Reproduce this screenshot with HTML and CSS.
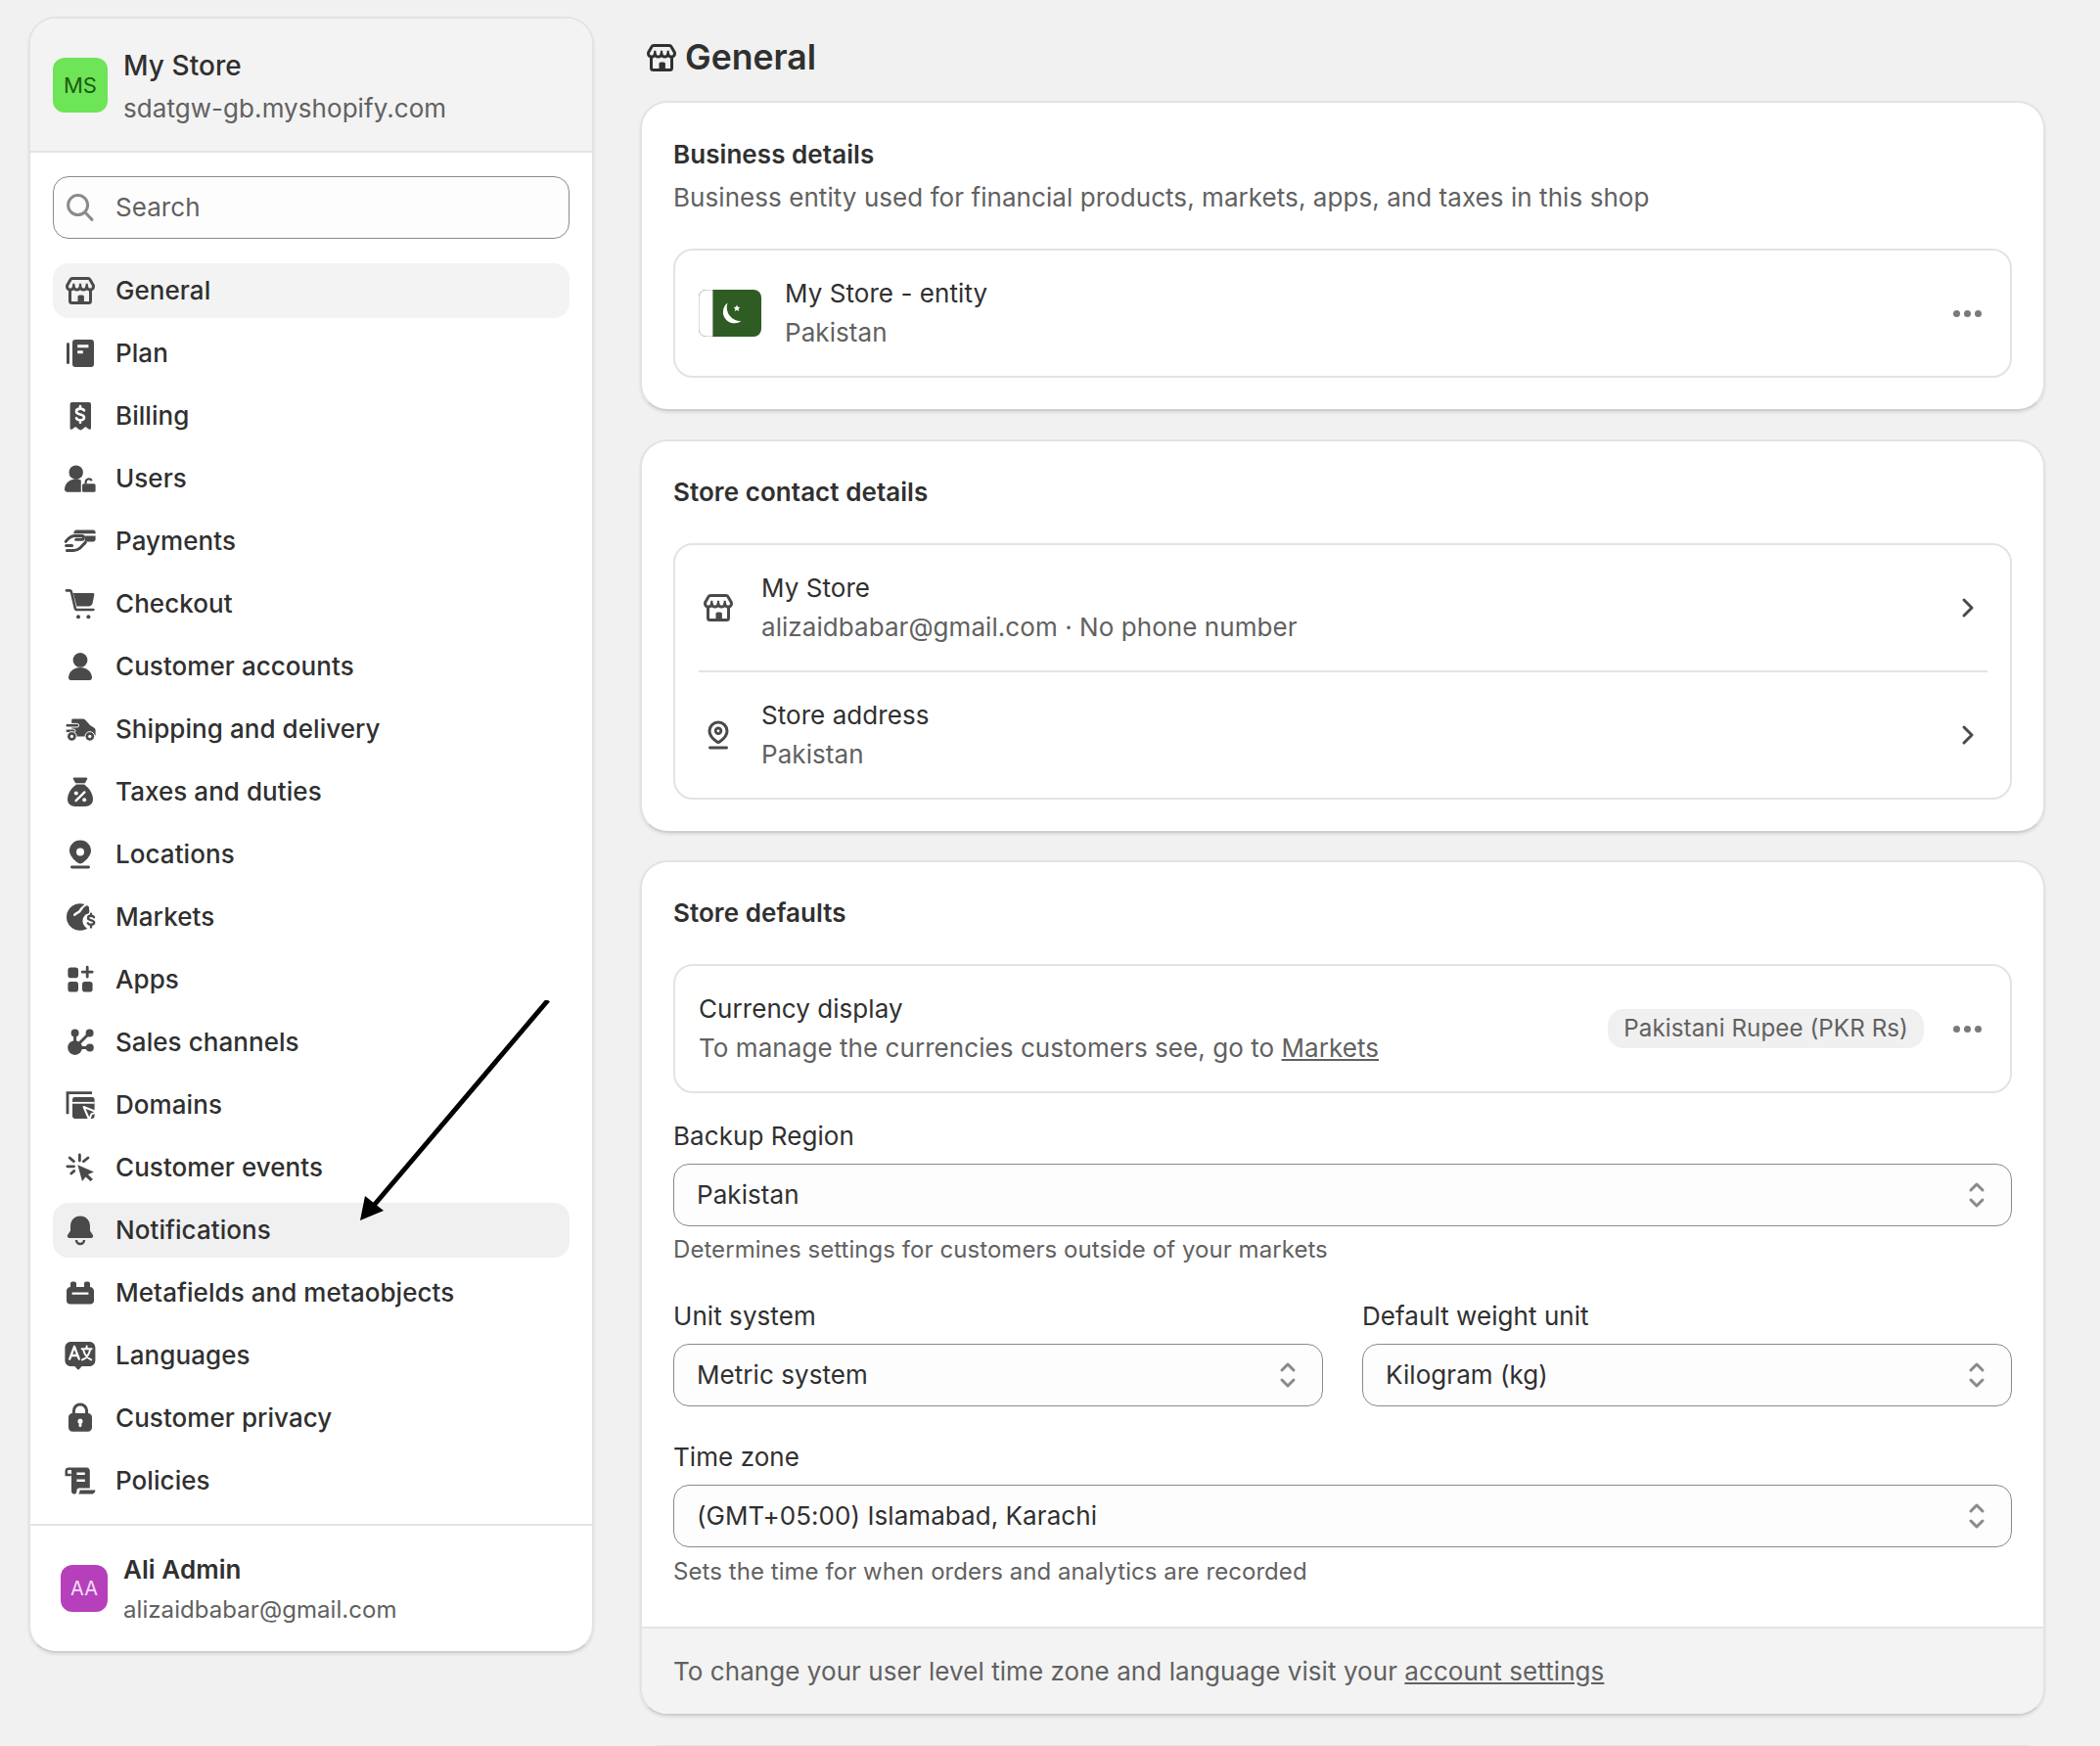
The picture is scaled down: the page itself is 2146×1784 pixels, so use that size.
FILE: index.html
```html
<!DOCTYPE html>
<html lang="en">
<head>
    <meta charset="UTF-8">
    <meta name="viewport" content="width=device-width, initial-scale=1.0">
    <title>General</title>
    <link rel="stylesheet" href="styles.css">
</head>
<body>
    <svg class="sprites" xmlns="http://www.w3.org/2000/svg">
        <symbol id="i-store" viewBox="0 0 20 20">
            <path fill="none" stroke="currentColor" stroke-width="1.5" stroke-linejoin="round" d="M6 3.75h8c.4 0 .8.2 1 .6l1.5 2.6c.2.3.25.6.25.9a1.7 1.7 0 0 1-3.4 0 1.675 1.675 0 0 1-3.35 0 1.675 1.675 0 0 1-3.35 0 1.7 1.7 0 0 1-3.4 0c0-.3.05-.6.25-.9l1.5-2.6c.2-.4.6-.6 1-.6z"/>
            <path fill="none" stroke="currentColor" stroke-width="1.1" d="M13.35 7.8V6.4M10 7.8V6.4M6.65 7.8V6.4"/>
            <path fill="none" stroke="currentColor" stroke-width="1.5" d="M4.75 9.8v5.45c0 .55.45 1 1 1h8.5c.55 0 1-.45 1-1V9.8"/>
            <path d="M8.75 16.25v-3.1c0-.5.4-.9.9-.9h1.4c.5 0 .9.4.9.9v3.1z"/>
        </symbol>
        <symbol id="i-plan" viewBox="0 0 20 20">
            <rect x="3" y="4.5" width="1.5" height="11" rx=".75"/>
            <path fill-rule="evenodd" d="M7.5 3h8A1.5 1.5 0 0 1 17 4.5v11a1.5 1.5 0 0 1-1.5 1.5h-8A1.5 1.5 0 0 1 6 15.5v-11A1.5 1.5 0 0 1 7.5 3zM8.6 5.6v1.5h5.6V5.6zM8.6 8.6v1.5h2.8V8.6z"/>
        </symbol>
        <symbol id="i-billing" viewBox="0 0 20 20">
            <path d="M5.5 3h9c.55 0 1 .45 1 1v12.2c0 .6-.6.9-1.1.6l-1.7-1.3-1.9 1.5c-.45.3-.85.3-1.3 0l-1.9-1.5-1.7 1.3c-.5.3-1.1 0-1.1-.6V4c0-.55.45-1 1-1z"/>
            <path fill="none" stroke="#fff" stroke-width="1.3" stroke-linecap="round" d="M12 7.2c-.3-.6-1-.9-2-.9-1.1 0-2 .5-2 1.4 0 2 4 1.1 4 3 0 .9-.9 1.4-2 1.4-1 0-1.7-.3-2-1M10 5v1.2M10 12.2v1.2"/>
        </symbol>
        <symbol id="i-users" viewBox="0 0 20 20">
            <circle cx="7.85" cy="6.85" r="3.6"/>
            <path d="M2 15.5c0-3 2.6-5.3 5.8-5.3 1 0 1.9.2 2.6.6v6.1h-7c-.8 0-1.4-.6-1.4-1.4z"/>
            <rect x="11" y="12.6" width="6.8" height="4.3" rx=".8"/>
            <path fill="none" stroke="currentColor" stroke-width="1.1" d="M12.8 12.8v-1a1.65 1.65 0 0 1 3.1-.7"/>
        </symbol>
        <symbol id="i-payments" viewBox="0 0 20 20">
            <path d="M8 4.3h8.6c.7 0 1.2.5 1.2 1.1v.7H6.6C6.8 5 7.2 4.3 8 4.3z"/>
            <path d="M11.8 7.2h6v1.9c0 .6-.5 1.1-1.2 1.1h-4.400c.4-1 .5-2.200-.4-3z"/>
            <path fill="none" stroke="currentColor" stroke-width="1.5" stroke-linecap="round" stroke-linejoin="round" d="M2.6 10.200C4 8.400 5.500 7.400 7 7.300h3.900c1 0 1 1.800 0 1.800H7.800M3.200 14.700h3.400c1.400 0 2.400-.5 3.400-1.300l2.600-2.700M2.800 12.200h3"/>
        </symbol>
        <symbol id="i-checkout" viewBox="0 0 20 20">
            <path fill="none" stroke="currentColor" stroke-width="1.3" stroke-linecap="round" stroke-linejoin="round" d="M3 3.2h1.5c.5 0 .9.3 1 .8l2 8.6c.1.3.3.4.6.4h8.6"/>
            <path d="M6.4 4.5h10.2c.4 0 .7.4.6.8l-.9 4.3c-.2.9-1 1.6-2 1.6H8.2z"/>
            <circle cx="9" cy="16.6" r="1"/>
            <circle cx="14.2" cy="16.6" r="1"/>
        </symbol>
        <symbol id="i-customer" viewBox="0 0 20 20">
            <circle cx="10" cy="6.7" r="3.7"/>
            <path d="M4 15.8c0-3 2.7-5.3 6-5.3s6 2.3 6 5.3c0 .7-.5 1.2-1.2 1.2H5.2C4.5 17 4 16.5 4 15.8z"/>
        </symbol>
        <symbol id="i-shipping" viewBox="0 0 20 20">
            <path d="M6.200 4.700h5c.7 0 1.300.3 1.700.9L15 8l2 1.200c.5.3.8.8.8 1.300v2.300c0 .6-.4 1-1 1H7c-.8 0-1.400-.6-1.400-1.400V5.300c0-.3.3-.6.6-.6z"/>
            <g stroke="#fff" stroke-width=".5">
                <rect x="2.500" y="7.200" width="6.800" height="1.800" rx=".9"/>
                <rect x="2.500" y="10" width="5" height="1.800" rx=".9"/>
                <circle cx="5.700" cy="13.700" r="2.400"/>
                <circle cx="14.900" cy="13.700" r="2.400"/>
            </g>
            <circle cx="5.700" cy="13.700" r=".8" fill="#fff"/>
            <circle cx="14.900" cy="13.700" r=".8" fill="#fff"/>
        </symbol>
        <symbol id="i-taxes" viewBox="0 0 20 20">
            <path d="M6.9 2.7h6.2c.4 0 .7.4.5.8l-1.2 2.1H7.6L6.4 3.5c-.2-.4.1-.8.5-.8z"/>
            <path d="M8 6.3h4c2.5 1.7 4.5 4.7 4.5 7.5 0 2.4-1.7 3.7-4 3.7h-5c-2.3 0-4-1.3-4-3.7 0-2.8 2-5.8 4.5-7.5z"/>
            <path fill="none" stroke="#fff" stroke-width="1.2" stroke-linecap="round" d="M7.8 14.6l4.4-4.4"/>
            <circle cx="7.9" cy="10.7" r="1" fill="#fff"/>
            <circle cx="12.1" cy="14.1" r="1" fill="#fff"/>
        </symbol>
        <symbol id="i-location" viewBox="0 0 20 20">
            <path fill-rule="evenodd" d="M10 2.700c3.100 0 5.500 2.400 5.500 5.400 0 2.400-2.400 4.900-4.400 6.300-.7.5-1.500.5-2.200 0-2-1.400-4.400-3.900-4.400-6.300 0-3 2.400-5.400 5.500-5.400zM10 6.700a2 2 0 1 0 0 4 2 2 0 0 0 0-4z"/>
            <rect x="5" y="15.800" width="10" height="1.400" rx=".7"/>
        </symbol>
        <symbol id="i-pin" viewBox="0 0 20 20">
            <path fill="none" stroke="currentColor" stroke-width="1.5" d="M10 3.500c2.500 0 4.500 2 4.500 4.500 0 2-2 4.200-3.700 5.400-.5.35-1.100.35-1.600 0C7.500 12.200 5.500 10 5.500 8c0-2.500 2-4.500 4.500-4.500z"/>
            <circle cx="10" cy="7.900" r="1.400" fill="none" stroke="currentColor" stroke-width="1.400"/>
            <rect x="5" y="15.800" width="10" height="1.400" rx=".7"/>
        </symbol>
        <symbol id="i-markets" viewBox="0 0 20 20">
            <circle cx="9.900" cy="10" r="6.900"/>
            <path fill="none" stroke="#fff" stroke-width="1.200" stroke-linecap="round" d="M13.400 2.800c-.8 2-2.800 2.200-3.300 3.700-.5 1.400-2.100 1.100-3 2.400"/>
            <circle cx="15.500" cy="12" r="4.300" fill="#fff"/>
            <path fill="#fff" d="M14.500 3.500h4v6h-4z"/>
            <path fill="none" stroke="currentColor" stroke-width="1.200" stroke-linecap="round" d="M17 10.100c-.3-.5-.8-.7-1.500-.7-.9 0-1.500.4-1.500 1.100 0 1.500 3.100.8 3.100 2.300 0 .7-.7 1.100-1.600 1.100-.7 0-1.300-.2-1.600-.8M15.500 8.300v1.100M15.500 14v1.200"/>
            <path d="M12 4.700c1.200.2 2.300 1 2.800 2.100l-.7 1.400-2.100.3-1.100-1.200z"/>
        </symbol>
        <symbol id="i-apps" viewBox="0 0 20 20">
            <rect x="3.7" y="3.8" width="5.3" height="5.3" rx="1.4"/>
            <rect x="3.7" y="11" width="5.3" height="5.3" rx="1.4"/>
            <rect x="11" y="11" width="5.3" height="5.3" rx="1.4"/>
            <path fill="none" stroke="currentColor" stroke-width="1.4" stroke-linecap="round" d="M13.6 3.6v5M11.1 6.1h5"/>
        </symbol>
        <symbol id="i-channels" viewBox="0 0 20 20">
            <circle cx="7.3" cy="12.8" r="3.7"/>
            <circle cx="7.3" cy="5.3" r="2"/>
            <circle cx="14.8" cy="5.3" r="2"/>
            <circle cx="14.9" cy="12.8" r="2"/>
            <path fill="none" stroke="currentColor" stroke-width="1.5" d="M7.3 6v5M14 6l-5.5 5.5M9 12.8h5"/>
        </symbol>
        <symbol id="i-domains" viewBox="0 0 20 20">
            <path fill="none" stroke="currentColor" stroke-width="1.4" d="M16 3.800H3.500v10.800"/>
            <rect x="6" y="6" width="11.300" height="11" rx="1.200"/>
            <path fill="none" stroke="#fff" stroke-width=".9" d="M6 8.900h11.300"/>
            <path stroke="#fff" stroke-width="1" stroke-linejoin="round" d="M11.800 11l6.600 2.600-2.700 1.100-1.100 2.800z"/>
        </symbol>
        <symbol id="i-events" viewBox="0 0 20 20">
            <path fill="none" stroke="currentColor" stroke-width="1.4" stroke-linecap="round" d="M9.700 3.500v3M3.400 9.400h3.400M4.600 5l2.100 1.800M14 5l-2.300 1.800M5.400 13l1.500-1.300"/>
            <path d="M8.700 8.600L17 12.200l-3 1.300 2.500 2.500-1.300 1-2.400-2.200L11 17z"/>
        </symbol>
        <symbol id="i-bell" viewBox="0 0 20 20">
            <path d="M10 2.800c-3 0-5 2.300-5 5.200v2.200l-1.400 2.200c-.5.8 0 1.600 1 1.600h10.800c1 0 1.500-.8 1-1.600L15 10.200V8c0-2.900-2-5.200-5-5.200z"/>
            <path fill="none" stroke="currentColor" stroke-width="1.200" d="M8 15a2 2 0 0 0 4 0"/>
        </symbol>
        <symbol id="i-meta" viewBox="0 0 20 20">
            <path fill-rule="evenodd" d="M5 7V5.200c0-.55.45-1 1-1h1c.55 0 1 .45 1 1V7h4V5.200c0-.55.45-1 1-1h1c.55 0 1 .45 1 1V7c1.100 0 2 .9 2 2v5c0 1-.8 1.800-1.800 1.800H4.800C3.800 15.800 3 15 3 14V9c0-1.100.9-2 2-2zM5.800 9.700v1.200h8.400V9.700z"/>
        </symbol>
        <symbol id="i-lang" viewBox="0 0 20 20">
            <path d="M5.200 3h9.500c1.700 0 3 1.300 3 3v6.500c0 1.700-1.300 3-3 3h-3.900l-1.300 1.500c-.3.300-.7.300-1 0l-1.300-1.500h-2c-1.700 0-3-1.300-3-3V6c0-1.700 1.300-3 3-3z"/>
            <path fill="none" stroke="#fff" stroke-width="1.150" stroke-linecap="round" stroke-linejoin="round" d="M4.600 11.800L7 5.400l2.400 6.400M5.400 10h3.200"/>
            <path fill="none" stroke="#fff" stroke-width="1" stroke-linecap="round" d="M10.800 6.600h5M13.300 5.200v1.400M11.500 6.800c.6 2.600 2.200 4.600 4.100 5.400M15.100 6.800c-.5 2.600-2 4.600-4.100 5.400"/>
        </symbol>
        <symbol id="i-lock" viewBox="0 0 20 20">
            <path fill="none" stroke="currentColor" stroke-width="1.500" d="M6.700 8V6.300a3.300 3.300 0 0 1 6.600 0V8"/>
            <path fill-rule="evenodd" d="M6 7.500h8c1.100 0 2 .9 2 2v5.400c0 1.100-.9 2-2 2H6c-1.100 0-2-.9-2-2V9.500c0-1.100.9-2 2-2zM10 10.300a1.300 1.300 0 0 0-.7 2.400v1.200c0 .4.300.7.700.7s.7-.3.700-.7v-1.200a1.300 1.300 0 0 0-.7-2.400z"/>
        </symbol>
        <symbol id="i-policies" viewBox="0 0 20 20">
            <path fill-rule="evenodd" d="M5.500 3.200h7.800c.9 0 1.600.7 1.600 1.600v9H9.500c-.8 0-1.300.6-1.300 1.300v.4c0 .7-.5 1.300-1.300 1.300-.8 0-1.400-.6-1.400-1.400zM8.200 5.700v1.300h4.200V5.700zM8.200 9.200v1.300h4.200V9.200z"/>
            <path fill="none" stroke="currentColor" stroke-width="1.300" d="M5.500 3.850H4c-.6 0-1.100.5-1.100 1.100V7h2.500"/>
            <path d="M9.800 14.800h7.900c0 1.100-.8 2-1.900 2H9c.6-.5.800-1.300.8-2z"/>
        </symbol>
    </svg>

    <div class="page">
        <aside class="sidebar">
            <header class="side-head">
                <span class="avatar avatar-store">MS</span>
                <div class="who">
                    <p class="who-name">My Store</p>
                    <p class="who-sub">sdatgw-gb.myshopify.com</p>
                </div>
            </header>

            <div class="side-body">
                <div class="search">
                    <svg class="icon search-icon" viewBox="0 0 20 20"><circle cx="8.800" cy="8.800" r="5" fill="none" stroke="currentColor" stroke-width="1.500"/><path fill="none" stroke="currentColor" stroke-width="1.500" stroke-linecap="round" d="M12.600 12.600l3.400 3.600"/></svg>
                    <span>Search</span>
                </div>

                <nav class="nav">
                    <a class="nav-item is-active"><svg class="icon"><use href="#i-store"/></svg>General</a>
                    <a class="nav-item"><svg class="icon"><use href="#i-plan"/></svg>Plan</a>
                    <a class="nav-item"><svg class="icon"><use href="#i-billing"/></svg>Billing</a>
                    <a class="nav-item"><svg class="icon"><use href="#i-users"/></svg>Users</a>
                    <a class="nav-item"><svg class="icon"><use href="#i-payments"/></svg>Payments</a>
                    <a class="nav-item"><svg class="icon"><use href="#i-checkout"/></svg>Checkout</a>
                    <a class="nav-item"><svg class="icon"><use href="#i-customer"/></svg>Customer accounts</a>
                    <a class="nav-item"><svg class="icon"><use href="#i-shipping"/></svg>Shipping and delivery</a>
                    <a class="nav-item"><svg class="icon"><use href="#i-taxes"/></svg>Taxes and duties</a>
                    <a class="nav-item"><svg class="icon"><use href="#i-location"/></svg>Locations</a>
                    <a class="nav-item"><svg class="icon"><use href="#i-markets"/></svg>Markets</a>
                    <a class="nav-item"><svg class="icon"><use href="#i-apps"/></svg>Apps</a>
                    <a class="nav-item"><svg class="icon"><use href="#i-channels"/></svg>Sales channels</a>
                    <a class="nav-item"><svg class="icon"><use href="#i-domains"/></svg>Domains</a>
                    <a class="nav-item"><svg class="icon"><use href="#i-events"/></svg>Customer events</a>
                    <a class="nav-item is-hover"><svg class="icon"><use href="#i-bell"/></svg>Notifications</a>
                    <a class="nav-item"><svg class="icon"><use href="#i-meta"/></svg>Metafields and metaobjects</a>
                    <a class="nav-item"><svg class="icon"><use href="#i-lang"/></svg>Languages</a>
                    <a class="nav-item"><svg class="icon"><use href="#i-lock"/></svg>Customer privacy</a>
                    <a class="nav-item"><svg class="icon"><use href="#i-policies"/></svg>Policies</a>
                </nav>
            </div>

            <footer class="side-foot">
                <span class="avatar avatar-user">AA</span>
                <div>
                    <p class="who-name">Ali Admin</p>
                    <p class="who-sub">alizaidbabar@gmail.com</p>
                </div>
            </footer>
        </aside>

        <main class="content">
            <h1 class="page-title"><svg class="icon"><use href="#i-store"/></svg>General</h1>

            <section class="card card-business">
                <h2 class="card-title">Business details</h2>
                <p class="muted card-sub">Business entity used for financial products, markets, apps, and taxes in this shop</p>
                <div class="box box-entity">
                    <div class="row">
                        <svg class="flag" viewBox="0 0 64 48">
                            <rect width="64" height="48" fill="#2f5c23"/>
                            <path d="M14 .5H7A6.500 6.500 0 0 0 .5 7v34A6.500 6.500 0 0 0 7 47.500h7z" fill="#fff" stroke="#dedede"/>
                            <path fill="#fff" d="M29.500 13.500A11.600 11.600 0 0 0 43.500 32 14 14 0 0 1 29.500 13.500z"/>
                            <path fill="#fff" d="M39 15.500l1 2.300 2.500.2-1.900 1.600.6 2.400-2.200-1.300-2.200 1.300.6-2.400-1.900-1.600 2.500-.2z"/>
                        </svg>
                        <div class="row-text">
                            <p>My Store - entity</p>
                            <p class="muted">Pakistan</p>
                        </div>
                        <span class="dots"><i></i><i></i><i></i></span>
                    </div>
                </div>
            </section>

            <section class="card">
                <h2 class="card-title">Store contact details</h2>
                <div class="box">
                    <div class="row row-link">
                        <svg class="icon"><use href="#i-store"/></svg>
                        <div class="row-text">
                            <p>My Store</p>
                            <p class="muted">alizaidbabar@gmail.com · No phone number</p>
                        </div>
                        <svg class="icon chevron" viewBox="0 0 20 20"><path fill="none" stroke="currentColor" stroke-width="1.500" stroke-linecap="round" stroke-linejoin="round" d="M8 6l4 4-4 4"/></svg>
                    </div>
                    <div class="row row-link">
                        <svg class="icon"><use href="#i-pin"/></svg>
                        <div class="row-text">
                            <p>Store address</p>
                            <p class="muted">Pakistan</p>
                        </div>
                        <svg class="icon chevron" viewBox="0 0 20 20"><path fill="none" stroke="currentColor" stroke-width="1.500" stroke-linecap="round" stroke-linejoin="round" d="M8 6l4 4-4 4"/></svg>
                    </div>
                </div>
            </section>

            <section class="card card-defaults">
                <h2 class="card-title">Store defaults</h2>
                <div class="box box-entity">
                    <div class="row">
                        <div class="row-text">
                            <p>Currency display</p>
                            <p class="muted">To manage the currencies customers see, go to <a class="link">Markets</a></p>
                        </div>
                        <span class="pill">Pakistani Rupee (PKR Rs)</span>
                        <span class="dots"><i></i><i></i><i></i></span>
                    </div>
                </div>

                <div class="field field-backup">
                    <label>Backup Region</label>
                    <div class="select"><span>Pakistan</span><svg class="icon updown" viewBox="0 0 20 20"><path fill="none" stroke="currentColor" stroke-width="1.500" stroke-linecap="round" stroke-linejoin="round" d="M7 7.500l3-3 3 3M7 12.500l3 3 3-3"/></svg></div>
                    <p class="muted help">Determines settings for customers outside of your markets</p>
                </div>

                <div class="field-pair">
                    <div class="field">
                        <label>Unit system</label>
                        <div class="select"><span>Metric system</span><svg class="icon updown" viewBox="0 0 20 20"><path fill="none" stroke="currentColor" stroke-width="1.500" stroke-linecap="round" stroke-linejoin="round" d="M7 7.500l3-3 3 3M7 12.500l3 3 3-3"/></svg></div>
                    </div>
                    <div class="field">
                        <label>Default weight unit</label>
                        <div class="select"><span>Kilogram (kg)</span><svg class="icon updown" viewBox="0 0 20 20"><path fill="none" stroke="currentColor" stroke-width="1.500" stroke-linecap="round" stroke-linejoin="round" d="M7 7.500l3-3 3 3M7 12.500l3 3 3-3"/></svg></div>
                    </div>
                </div>

                <div class="field field-zone">
                    <label>Time zone</label>
                    <div class="select"><span>(GMT+05:00) Islamabad, Karachi</span><svg class="icon updown" viewBox="0 0 20 20"><path fill="none" stroke="currentColor" stroke-width="1.500" stroke-linecap="round" stroke-linejoin="round" d="M7 7.500l3-3 3 3M7 12.500l3 3 3-3"/></svg></div>
                    <p class="muted help">Sets the time for when orders and analytics are recorded</p>
                </div>

                <div class="card-foot muted">To change your user level time zone and language visit your <a class="link">account settings</a></div>
            </section>

            <section class="card card-next"></section>
        </main>

        <svg class="arrow" viewBox="0 0 200 230" width="200" height="230">
            <path fill="none" stroke="#000" stroke-width="5" d="M192 0L12 212"/>
            <path d="M0 225l5-25 19 15z"/>
        </svg>
    </div>
</body>
</html>
```

FILE: styles.css
```css
html, body {
    margin: 0;
    padding: 0;
    height: 1784px;
    overflow: hidden;
}

body {
    background-color: #f1f1f1;
    color: #303030;
    font-family: Inter, "Noto Sans", sans-serif;
    font-size: 26px;
    line-height: 40px;
    letter-spacing: 0.06px;
}

p, h1, h2 {
    margin: 0;
}

.sprites {
    display: none;
}

.page {
    position: relative;
    display: flex;
    align-items: flex-start;
    gap: 47px;
    padding: 17px 0 0 29px;
}

.icon {
    width: 40px;
    height: 40px;
    flex: none;
    color: #4a4a4a;
    fill: currentColor;
}

.muted {
    color: #616161;
}

.link {
    color: inherit;
    text-decoration: underline;
}

/* sidebar */
.sidebar {
    width: 578px;
    background-color: #fff;
    border: 2px solid #e3e3e3;
    border-bottom-color: #cfcfcf;
    border-radius: 28px;
    box-shadow: 0 2px 3px rgba(0, 0, 0, 0.08);
    overflow: hidden;
    box-sizing: border-box;
}

.side-head {
    display: flex;
    align-items: center;
    gap: 16px;
    height: 135px;
    padding: 0 23px;
    background-color: #f3f3f3;
    border-bottom: 2px solid #e3e3e3;
}

.who {
    padding-top: 4px;
}

.side-foot {
    display: flex;
    align-items: center;
    gap: 16px;
    height: 128px;
    padding: 0 23px 0 31px;
    border-top: 2px solid #e3e3e3;
}

.avatar {
    display: flex;
    align-items: center;
    justify-content: center;
    flex: none;
    border-radius: 12px;
}

.avatar-store {
    width: 56px;
    height: 56px;
    background-color: #6ee457;
    color: #1d5c12;
    font-size: 22px;
}

.avatar-user {
    width: 48px;
    height: 48px;
    background-color: #b640bb;
    color: #f8def8;
    font-size: 20px;
}

.who-name {
    font-weight: 600;
    line-height: 44px;
}

.who-sub {
    color: #616161;
    line-height: 44px;
}

.side-head .who-name {
    font-size: 28px;
    font-weight: 550;
}

.side-foot .who-sub {
    font-size: 24px;
    line-height: 38px;
}

.side-body {
    padding: 24px 23px 16px;
}

.search {
    display: flex;
    align-items: center;
    gap: 16px;
    height: 64px;
    padding: 0 9px;
    box-sizing: border-box;
    background-color: #fdfdfd;
    border: 1px solid #8a8a8a;
    border-radius: 16px;
    color: #616161;
}

.search-icon {
    color: #8a8a8a;
    margin-left: -2px;
}

.nav {
    display: flex;
    flex-direction: column;
    gap: 8px;
    margin-top: 25px;
}

.nav-item {
    display: flex;
    align-items: center;
    gap: 16px;
    height: 56px;
    padding: 0 8px;
    border-radius: 16px;
    font-weight: 500;
}

.is-active {
    background-color: #f3f3f3;
}

.is-hover {
    background-color: #f0f0f0;
}

/* main column */
.content {
    width: 1436px;
    display: flex;
    flex-direction: column;
    gap: 30px;
}

.page-title {
    display: flex;
    align-items: center;
    gap: 4px;
    height: 58px;
    margin: 13px 0 -15px 0;
    padding-left: 2px;
    font-size: 35.6px;
    font-weight: 600;
    letter-spacing: 0;
}

.page-title .icon {
    color: #303030;
}

.card {
    background-color: #fff;
    border: 2px solid #e3e3e3;
    border-bottom-color: #cfcfcf;
    border-radius: 28px;
    box-shadow: 0 2px 3px rgba(0, 0, 0, 0.08);
    padding: 32px;
    overflow: hidden;
}

.card-business {
    padding-top: 33px;
    margin-bottom: -1px;
}

.card-title {
    font-size: 26px;
    font-weight: 600;
}

.card-sub {
    margin-top: 4px;
}

.box {
    margin-top: 32px;
    border: 2px solid #e3e3e3;
    border-radius: 20px;
    padding: 0 23px 0 24px;
}

.row {
    display: flex;
    align-items: center;
    padding: 24px 0;
}

.row-link {
    gap: 24px;
}

.row-link + .row-link {
    border-top: 2px solid #e3e3e3;
}

.row-text {
    flex: 1;
}

.flag {
    width: 64px;
    height: 48px;
    margin-right: 24px;
    border-radius: 8px;
    flex: none;
}

.dots {
    display: flex;
    gap: 4px;
    width: 40px;
    justify-content: center;
    margin-left: 24px;
    margin-right: 1px;
}

.dots i {
    width: 7px;
    height: 7px;
    border-radius: 50%;
    background-color: #7a7a7a;
}

.chevron {
    color: #4a4a4a;
}

.pill {
    background-color: #f0f0f0;
    color: #616161;
    font-size: 24.2px;
    border-radius: 16px;
    line-height: 40px;
    padding: 0 16px;
}

/* form */
.card-defaults {
    margin-top: -2px;
}

.field-backup {
    margin-top: 24px;
}

.field label {
    display: block;
}

.select {
    display: flex;
    align-items: center;
    justify-content: space-between;
    height: 64px;
    margin-top: 8px;
    padding: 0 15px 0 23px;
    box-sizing: border-box;
    background-color: #fdfdfd;
    border: 1px solid #8a8a8a;
    border-radius: 16px;
}

.updown {
    color: #8a8a8a;
}

.help {
    margin-top: 4px;
    font-size: 24px;
}

.field-pair {
    display: grid;
    grid-template-columns: 1fr 1fr;
    gap: 40px;
    margin-top: 28px;
}

.field-zone {
    margin-top: 32px;
}

.field-zone .help {
    margin-top: 5px;
}

.card-foot {
    margin: 36px -32px -32px;
    padding: 24px 32px 23px;
    background-color: #f3f3f3;
    border-top: 2px solid #e3e3e3;
}

.card-next {
    height: 40px;
    padding: 0;
}

/* the hand drawn pointer over the sidebar */
.arrow {
    position: absolute;
    left: 368px;
    top: 1022px;
}
```
